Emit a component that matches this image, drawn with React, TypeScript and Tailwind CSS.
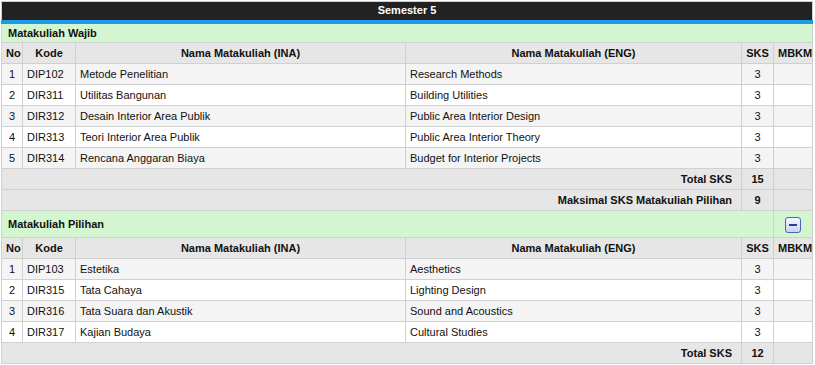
import * as React from "react";

type Course = { no: number; kode: string; ina: string; eng: string; sks: number };

const wajib: Course[] = [
  { no: 1, kode: "DIP102", ina: "Metode Penelitian", eng: "Research Methods", sks: 3 },
  { no: 2, kode: "DIR311", ina: "Utilitas Bangunan", eng: "Building Utilities", sks: 3 },
  { no: 3, kode: "DIR312", ina: "Desain Interior Area Publik", eng: "Public Area Interior Design", sks: 3 },
  { no: 4, kode: "DIR313", ina: "Teori Interior Area Publik", eng: "Public Area Interior Theory", sks: 3 },
  { no: 5, kode: "DIR314", ina: "Rencana Anggaran Biaya", eng: "Budget for Interior Projects", sks: 3 },
];

const pilihan: Course[] = [
  { no: 1, kode: "DIP103", ina: "Estetika", eng: "Aesthetics", sks: 3 },
  { no: 2, kode: "DIR315", ina: "Tata Cahaya", eng: "Lighting Design", sks: 3 },
  { no: 3, kode: "DIR316", ina: "Tata Suara dan Akustik", eng: "Sound and Acoustics", sks: 3 },
  { no: 4, kode: "DIR317", ina: "Kajian Budaya", eng: "Cultural Studies", sks: 3 },
];

const cell = "border border-[#d0d0d0] px-[4px] h-[21px] p-0";

function HeaderRow() {
  return (
    <tr className="bg-[#e6e6e6] font-bold">
      <td className={cell + " text-center"}>No</td>
      <td className={cell + " text-center"}>Kode</td>
      <td className={cell + " text-center"}>Nama Matakuliah (INA)</td>
      <td className={cell + " text-center"}>Nama Matakuliah (ENG)</td>
      <td className={cell + " text-center"}>SKS</td>
      <td className={cell + " text-center"}>MBKM</td>
    </tr>
  );
}

function CourseRows({ rows }: { rows: Course[] }) {
  return (
    <>
      {rows.map((c, i) => (
        <tr key={c.kode} className={i % 2 === 0 ? "bg-[#f4f4f4]" : "bg-white"}>
          <td className={cell + " text-center"}>{c.no}</td>
          <td className={cell}>{c.kode}</td>
          <td className={cell}>{c.ina}</td>
          <td className={cell}>{c.eng}</td>
          <td className={cell + " text-center"}>{c.sks}</td>
          <td className={cell}></td>
        </tr>
      ))}
    </>
  );
}

function SummaryRow({ label, value }: { label: string; value: number }) {
  return (
    <tr className="bg-[#e6e6e6] font-bold">
      <td colSpan={4} className={cell + " text-right pr-[9px]"}>
        {label}
      </td>
      <td className={cell + " text-center"}>{value}</td>
      <td className={cell}></td>
    </tr>
  );
}

export default function App() {
  return (
    <div className="bg-white w-[815px] h-[365px] pt-px pl-px font-['Liberation_Sans',Arial,sans-serif] text-[11px] text-[#111]">
      <table className="w-[811px] border-collapse border border-[#d0d0d0] table-fixed">
        <colgroup>
          <col className="w-[21px]" />
          <col className="w-[53px]" />
          <col className="w-[330px]" />
          <col className="w-[336px]" />
          <col className="w-[32px]" />
          <col className="w-[39px]" />
        </colgroup>
        <tbody>
          <tr>
            <td
              colSpan={6}
              className="bg-[#222222] text-white font-bold text-center h-[20px] p-0 border-b-[4px] border-[#1e9be8] leading-[15px] text-[11px]"
            >
              Semester 5
            </td>
          </tr>
          <tr className="bg-[#d3f5d0] font-bold">
            <td colSpan={6} className={cell + " pl-[6px]"}>
              Matakuliah Wajib
            </td>
          </tr>
          <HeaderRow />
          <CourseRows rows={wajib} />
          <SummaryRow label="Total SKS" value={15} />
          <SummaryRow label="Maksimal SKS Matakuliah Pilihan" value={9} />
          <tr className="bg-[#d3f5d0] font-bold">
            <td colSpan={5} className="border border-[#d0d0d0] h-[27px] p-0 pl-[6px]">
              Matakuliah Pilihan
            </td>
            <td className="border border-[#d0d0d0] p-0 text-center">
              <button className="inline-flex items-center justify-center w-[16px] h-[16px] rounded-[3px] border border-[#4a63b8] bg-gradient-to-b from-[#f4f6ff] to-[#c9d3f2] align-middle">
                <span className="block w-[8px] h-[2px] bg-[#2a3f8f]" />
              </button>
            </td>
          </tr>
          <HeaderRow />
          <CourseRows rows={pilihan} />
          <SummaryRow label="Total SKS" value={12} />
        </tbody>
      </table>
    </div>
  );
}
